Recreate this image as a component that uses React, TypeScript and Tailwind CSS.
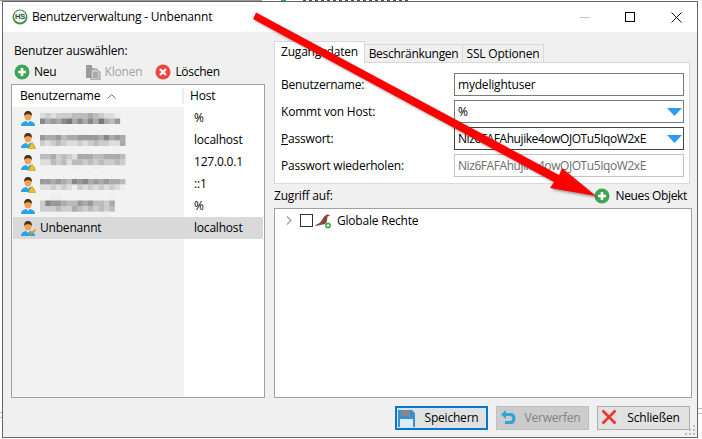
import React from "react";

const font = "font-['Open_Sans','Noto_Sans',sans-serif]";

function PlusIcon({ size = 16 }: { size?: number }) {
  return (
    <svg width={size} height={size} viewBox="0 0 16 16" className="shrink-0">
      <circle cx="8" cy="8" r="7.5" fill="#3fa650" />
      <path d="M8 4v8M4 8h8" stroke="#fff" strokeWidth="2.6" />
    </svg>
  );
}

function DeleteIcon() {
  return (
    <svg width="16" height="16" viewBox="0 0 16 16" className="shrink-0">
      <circle cx="8" cy="8" r="7.5" fill="#ee4540" />
      <path d="M5 5l6 6M11 5l-6 6" stroke="#fff" strokeWidth="2.2" />
    </svg>
  );
}

function CloneIcon() {
  return (
    <svg width="16" height="16" viewBox="0 0 16 16" className="shrink-0">
      <path d="M1 1h6v3h2v10H1z" fill="#9b9b9b" />
      <path d="M6 5h6l3 3v8H6z" fill="#c9c9c9" stroke="#8f8f8f" strokeWidth="0.8" />
      <path d="M8 9h5M8 11h5M8 13h5" stroke="#8a8a8a" />
    </svg>
  );
}

function UserIcon({ badge }: { badge?: "warn" | "edit" }) {
  return (
    <svg width="16" height="17" viewBox="0 0 16 17" className="shrink-0">
      <path d="M1 16c0-3.500 2.600-5 7-5s7 1.500 7 5z" fill="#26a4e6" />
      <path d="M6 10.500h4L8 13z" fill="#e8f4fb" />
      <ellipse cx="8" cy="6" rx="3.600" ry="4.600" fill="#f0a050" />
      <path d="M4.200 6C3.800 2.500 5.500 1 8 1s4.300 1.500 3.800 5C11 4.500 9.500 4 8 4.200 6.500 4 5 4.500 4.200 6z" fill="#4a3318" />
      {badge === "warn" && <path d="M12 10l3.800 6.500H8.200z" fill="#f4c020" stroke="#c08a10" strokeWidth="0.5" />}
      {badge === "edit" && <path d="M9 16l1-3 5-4 1 1.500-5 4z" fill="#e8942a" />}
    </svg>
  );
}

function Mosaic({ lines }: { lines: string[] }) {
  const w = 5.33;
  const h = 5.5;
  return (
    <svg width="92" height={lines.length * h} viewBox={`0 0 92 ${lines.length * h}`} className="block shrink-0">
      {lines.map((line, r) =>
        line.split("").map((c, i) =>
          c === "." ? null : (
            <rect key={`${r}-${i}`} x={i * w} y={r * h} width={w + 0.2} height={h + 0.2} fill={`#${c}${c}${c}`} />
          )
        )
      )}
    </svg>
  );
}

function Triangle() {
  return (
    <svg width="15" height="8" viewBox="0 0 15 8" className="absolute right-[1px] top-[7px]">
      <path d="M0 0h15L7.500 8z" fill="#2e9bef" />
    </svg>
  );
}

const rows: { host: string; badge?: "warn" | "edit"; mosaic?: string[]; name?: string; selected?: boolean }[] = [
  { host: "%", mosaic: ["dcdcccbbbabcdde", "8a9a87a8a8a7ab9"] },
  { host: "localhost", badge: "warn", mosaic: ["9aa9baa9999a8a9a", "cdcbcddcdcbccdda"] },
  { host: "127.0.0.1", badge: "warn", mosaic: ["bbacbcdaaabbaaab", "ddbcbdbbcbcbccbc", "......e...e....."] },
  { host: "::1", badge: "warn", mosaic: ["99a9ab898a9a9aab", "ddcdcdecdcdcdcde"] },
  { host: "%", mosaic: ["..ee.........e", "c899abb9a9bbca", "cccbccabcbcbcb", "............e."] },
  { host: "localhost", badge: "edit", name: "Unbenannt", selected: true },
];

function Field({ label, value, underline, focus, disabled, drop, tight }: { label: string; value: string; underline?: boolean; focus?: boolean; disabled?: boolean; drop?: boolean; tight?: boolean }) {
  return (
    <div className="flex h-[23px] items-center">
      <div className="w-[173px] shrink-0 text-black">
        {underline ? <><span className="underline">P</span>{label.slice(1)}</> : label}
      </div>
      <div
        className={`relative flex h-[23px] flex-1 items-center overflow-hidden border pl-[3px] ${tight ? "tracking-[-0.43px]" : ""} ${
          disabled ? "border-[#c4c4c4] text-[#6d6d6d]" : focus ? "border-[#444444] text-black" : "border-[#7a7a7a] text-black"
        }`}
      >
        {value}
        {drop && <Triangle />}
      </div>
    </div>
  );
}

function Button({ icon, label, cls }: { icon: React.ReactNode; label: string; cls: string }) {
  return (
    <div className={`relative flex h-[24px] w-[93px] items-center justify-center pl-[20px] ${cls}`}>
      <span className="absolute left-[1px] top-[2px]">{icon}</span>
      {label}
    </div>
  );
}

export default function App() {
  return (
    <div className={`relative h-[439px] w-[702px] overflow-hidden bg-white pl-[2px] pt-[1px] text-[12px] leading-[16px] tracking-[-0.2px] ${font}`}>
      {/* Slivers of the desktop behind the window */}
      <div className="absolute left-0 top-0 h-[1px] w-[262px] bg-[#999999]" />
      <div className="absolute left-[281px] top-0 h-[1px] w-[5px] bg-[#1f9bb0]" />
      <div className="absolute left-[303px] top-0 h-[1px] w-[108px] bg-[repeating-linear-gradient(to_right,#555555_0,#555555_3px,#ffffff_3px,#ffffff_6px)]" />
      <div className="absolute left-0 top-[412px] h-[1px] w-[2px] bg-[#bbbbbb]" />
      <div className="absolute left-0 top-[417px] h-[1px] w-[2px] bg-[#bbbbbb]" />
      <div className="absolute right-0 top-[408px] h-[1px] w-[4px] bg-[#bbbbbb]" />
      <div className="absolute right-0 top-[413px] h-[1px] w-[4px] bg-[#bbbbbb]" />

      <div className="relative flex h-[437px] w-[696px] flex-col border border-[#666666] bg-[#f0f0f0]">
        {/* Title bar */}
        <div className="flex h-[30px] shrink-0 items-center bg-white pl-[9px]">
          <svg width="16" height="16" viewBox="0 0 16 16" className="shrink-0">
            <circle cx="8" cy="8" r="7.5" fill="#3f8f4a" />
            <circle cx="8" cy="7.500" r="6" fill="#f4f4f4" />
            <text x="8" y="10.200" textAnchor="middle" fontSize="7.500" fontWeight="700" fill="#2f4f3a" fontFamily="Liberation Sans">HS</text>
          </svg>
          <span className="ml-[4px] text-black">Benutzerverwaltung - Unbenannt</span>
          <div className="ml-auto flex items-center">
            <div className="h-[1px] w-[10px] bg-[#c4c4c4]" />
            <div className="ml-[35px] h-[10px] w-[10px] border border-black" />
            <svg width="11" height="11" viewBox="0 0 11 11" className="ml-[36px] mr-[15px]">
              <path d="M0.500 0.500l10 10M10.500 0.500l-10 10" stroke="#111" strokeWidth="1" />
            </svg>
          </div>
        </div>

        {/* Main */}
        <div className="flex min-h-0 flex-1 pl-[8px] pr-[5px]">
          {/* Left */}
          <div className="flex w-[254px] shrink-0 flex-col pt-[11px]">
            <div className="h-[16px] pl-[3px] text-black">Benutzer auswählen:</div>
            <div className="mt-[3px] flex h-[20px] items-center pl-[3px]">
              <PlusIcon />
              <span className="ml-[4px] text-black">Neu</span>
              <span className="ml-[28px]"><CloneIcon /></span>
              <span className="ml-[4px] text-[#a3a3a3]">Klonen</span>
              <span className="ml-[13px]"><DeleteIcon /></span>
              <span className="ml-[4px] tracking-[-0.3px] text-black">Löschen</span>
            </div>
            <div className="mt-[2px] flex min-h-0 flex-1 flex-col overflow-hidden border border-[#a0a0a0] bg-white shadow-[inset_0_0_0_1px_#ffffff]">
              <div className="flex h-[22px] shrink-0 items-center">
                <div className="flex w-[172px] items-center border-r-2 border-[#eeeeee] pl-[8px] text-black">
                  Benutzername
                  <svg width="9" height="5" viewBox="0 0 9 5" className="ml-[7px]">
                    <path d="M0.500 4.500l4-4 4 4" fill="none" stroke="#6a6a6a" />
                  </svg>
                </div>
                <div className="pl-[6px] text-black">Host</div>
              </div>
              <div className="relative flex min-h-0 flex-1 flex-col bg-[linear-gradient(to_right,#f2f2f2_172px,#ffffff_172px)] px-[1px]">
                {rows.map((r, i) => (
                  <div key={i} className={`flex h-[22px] shrink-0 items-center ${r.selected ? "bg-[#d9d9d9]" : ""}`}>
                    <div className="flex w-[170px] items-center pl-[7px]">
                      <UserIcon badge={r.badge} />
                      <div className="ml-[4px] flex h-[22px] items-center text-black">
                        {r.mosaic ? <Mosaic lines={r.mosaic} /> : r.name}
                      </div>
                    </div>
                    <div className="pl-[11px] text-black">{r.host}</div>
                  </div>
                ))}
              </div>
            </div>
          </div>

          {/* Right */}
          <div className="ml-[9px] flex min-w-0 flex-1 flex-col pt-[9px]">
            <div className="flex h-[22px] shrink-0 items-end">
              <div className="relative z-10 flex h-[22px] w-[91px] items-center justify-center border border-b-0 border-[#d9d9d9] bg-white pb-[2px] text-black">Zugangsdaten</div>
              <div className="flex h-[19px] w-[98px] items-center justify-center border-y border-r border-[#d9d9d9] tracking-[-0.3px] text-black">Beschränkungen</div>
              <div className="flex h-[19px] w-[81px] items-center justify-center border-y border-r border-[#d9d9d9] text-black">SSL Optionen</div>
            </div>
            <div className="-mt-[1px] flex h-[122px] w-[416px] shrink-0 flex-col gap-[4px] border border-[#d9d9d9] bg-white pb-[6px] pl-[6px] pr-[5px] pt-[10px]">
              <Field label="Benutzername:" value="mydelightuser" />
              <Field label="Kommt von Host:" value="%" drop />
              <Field label="Passwort:" value="Niz6FAFAhujike4owOJOTu5IqoW2xE" underline focus drop tight />
              <Field label="Passwort wiederholen:" value="Niz6FAFAhujike4owOJOTu5IqoW2xE" disabled tight />
            </div>
            <div className="flex h-[24px] shrink-0 items-center justify-between pr-[5px] text-black">
              <span>Zugriff auf:</span>
              <span className="flex items-center">
                <PlusIcon />
                <span className="ml-[5px] tracking-[-0.35px]">Neues Objekt</span>
              </span>
            </div>
            <div className="flex min-h-0 flex-1 flex-col border border-[#a0a0a0] bg-white">
              <div className="flex h-[22px] items-center pl-[11px] pt-[1px] text-black">
                <svg width="6" height="9" viewBox="0 0 6 9">
                  <path d="M1 0.500l4 4-4 4" fill="none" stroke="#a6a6a6" strokeWidth="1.500" />
                </svg>
                <div className="ml-[8px] h-[13px] w-[13px] border border-[#333333] bg-white" />
                <svg width="17" height="16" viewBox="0 0 17 16" className="ml-[2px]">
                  <path d="M0 12.500C2 10.500 4 11 6 8.500 7.500 6.500 8.500 3.500 11 2c1.500-.8 3-.5 4 .8l-2.500.7-.5 4.500c-.5 2.500-2.500 3.500-4 3.500-3 .2-5 2-8 1z" fill="#8a4a38" />
                  <circle cx="13" cy="12.500" r="3" fill="#3fa650" />
                  <path d="M13 10.800v3.400M11.300 12.500h3.400" stroke="#fff" />
                </svg>
                <span className="ml-[5px]">Globale Rechte</span>
              </div>
            </div>
          </div>
        </div>

        {/* Buttons */}
        <div className="relative flex h-[39px] shrink-0 items-start justify-end gap-[8px] pr-[7px] pt-[8px]">
          <Button
            label="Speichern"
            cls="border-2 border-[#0078d7] bg-[#e1e1e1] text-black"
            icon={
              <svg width="17" height="17" viewBox="0 0 17 17">
                <path d="M0 0h14l3 3v14H0z" fill="#3d8fd0" />
                <rect x="3" y="0" width="9" height="6" fill="#7a8a98" />
                <rect x="2" y="9" width="13" height="8" fill="#dcecf8" />
              </svg>
            }
          />
          <Button
            label="Verwerfen"
            cls="border border-[#bfbfbf] bg-[#cccccc] text-[#838383]"
            icon={
              <svg width="17" height="17" viewBox="0 0 17 17" className="ml-[2px]">
                <path d="M6 1L1 5.500 6 10V7h4c3 0 3 5 0 5H5v3h6c6 0 6-11 0-11H6z" fill="#2ea7d6" />
              </svg>
            }
          />
          <Button
            label="Schließen"
            cls="border border-[#adadad] bg-[#e1e1e1] text-black"
            icon={
              <svg width="16" height="16" viewBox="0 0 16 16" className="ml-[2px]">
                <path d="M1.500 1.500l13 13M14.500 1.500l-13 13" stroke="#e8352e" strokeWidth="2.600" />
              </svg>
            }
          />
          <svg width="11" height="11" viewBox="0 0 11 11" className="absolute bottom-[1px] right-[1px]">
            <path d="M8 0h2v2H8zM4 4h2v2H4zM8 4h2v2H8zM0 8h2v2H0zM4 8h2v2H4zM8 8h2v2H8z" fill="#bdbdbd" />
          </svg>
        </div>
      </div>

      {/* Red annotation arrow */}
      <svg width="702" height="439" viewBox="0 0 702 439" className="pointer-events-none absolute left-0 top-0 z-20 drop-shadow-[2px_2px_1px_rgba(0,0,0,0.35)]">
        <path d="M256 12.500 L559 175 L562 168 L596 196 L550 188 L554 182 L253 19 Z" fill="#ff0000" />
      </svg>
    </div>
  );
}
